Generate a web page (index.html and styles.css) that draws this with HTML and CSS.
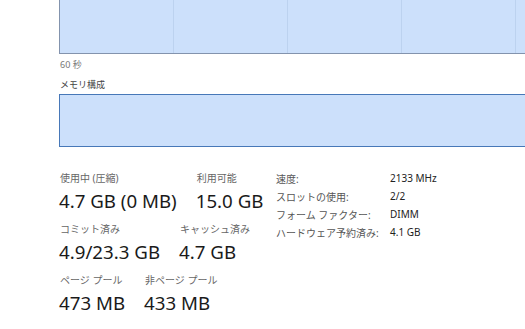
FILE: index.html
```html
<!DOCTYPE html>
<html lang="ja">
<head>
<meta charset="utf-8">
<link rel="stylesheet" href="styles.css">
</head>
<body>
<div class="page">
  <div class="graph graph-main"></div>
  <div class="axis">60 秒</div>
  <div class="section-title">メモリ構成</div>
  <div class="graph graph-comp"></div>
  <div class="stats">
    <div class="left">
      <div class="row">
        <div class="stat"><div class="label">使用中 (圧縮)</div><div class="value">4.7 GB (0 MB)</div></div>
        <div class="stat"><div class="label">利用可能</div><div class="value">15.0 GB</div></div>
      </div>
      <div class="row">
        <div class="stat"><div class="label">コミット済み</div><div class="value">4.9/23.3 GB</div></div>
        <div class="stat"><div class="label">キャッシュ済み</div><div class="value">4.7 GB</div></div>
      </div>
      <div class="row">
        <div class="stat"><div class="label">ページ プール</div><div class="value">473 MB</div></div>
        <div class="stat"><div class="label">非ページ プール</div><div class="value">433 MB</div></div>
      </div>
    </div>
    <div class="info">
      <div class="k">速度:</div><div class="v">2133 MHz</div>
      <div class="k">スロットの使用:</div><div class="v">2/2</div>
      <div class="k">フォーム ファクター:</div><div class="v">DIMM</div>
      <div class="k">ハードウェア予約済み:</div><div class="v">4.1 GB</div>
    </div>
  </div>
</div>
</body>
</html>
```
FILE: styles.css
```css
html, body {
  margin: 0;
  padding: 0;
  background: #ffffff;
  overflow: hidden;
}
body {
  width: 525px;
  height: 329px;
  font-family: "Segoe UI", "Noto Sans", "Noto Sans CJK JP", sans-serif;
  color: #1a1a1a;
}
.page {
  padding-left: 59px;
}
.graph {
  width: 465px;
  background-color: #cce0fb;
  box-sizing: content-box;
}
.graph-main {
  margin-top: -1px;
  height: 53px;
  border: 1px solid #8393ad;
  border-right: none;
  background-image: repeating-linear-gradient(to right,
    transparent 0, transparent 113px, #bcd2ef 113px, #bcd2ef 114px);
}
.graph-comp {
  height: 51px;
  border: 1px solid #4778b8;
  border-right: none;
}
.axis {
  font-size: 9px;
  line-height: 12px;
  color: #777;
  margin-top: 5px;
  padding-left: 1px;
}
.section-title {
  font-size: 9px;
  line-height: 12px;
  color: #444;
  margin-top: 8px;
  margin-bottom: 3px;
  padding-left: 1px;
}
.stats {
  display: flex;
  margin-top: 24px;
}
.left {
  width: 217px;
  display: flex;
  flex-direction: column;
  gap: 9px;
}
.row {
  display: flex;
  gap: 19px;
}
.stat {
  display: flex;
  flex-direction: column;
}
.label {
  font-size: 10px;
  line-height: 14px;
  color: #666;
  padding-left: 1px;
}
.value {
  font-size: 18.7px;
  line-height: 24px;
  margin-top: 4px;
  color: #1a1a1a;
}
.info {
  display: grid;
  grid-template-columns: 114px auto;
  grid-auto-rows: 18px;
  font-size: 10px;
  align-items: center;
  align-self: flex-start;
  margin-top: -2px;
}
.k {
  color: #555;
}
.v {
  color: #222;
}
```
